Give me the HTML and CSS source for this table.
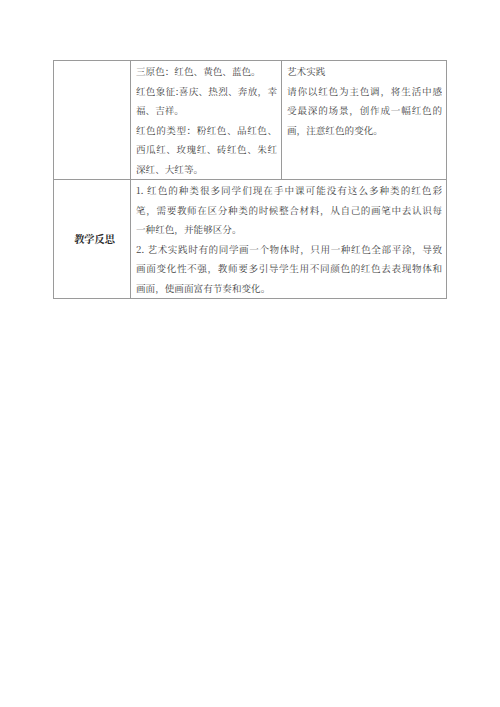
FILE: index.html
```html
<!DOCTYPE html>
<html lang="zh">
<head>
<meta charset="utf-8">
<link rel="stylesheet" href="styles.css">
</head>
<body>
<div class="page">
  <table class="plan">
    <colgroup>
      <col class="c1"><col class="c2"><col class="c3">
    </colgroup>
    <tr class="row">
      <td class="label"></td>
      <td class="cell">
        <span class="ln">三原色：红色、黄色、蓝色。</span>
        <span class="ln j">红色象征:喜庆、热烈、奔放，幸</span>
        <span class="ln">福、吉祥。</span>
        <span class="ln j">红色的类型：粉红色、品红色、</span>
        <span class="ln j">西瓜红、玫瑰红、砖红色、朱红</span>
        <span class="ln">深红、大红等。</span>
      </td>
      <td class="cell">
        <span class="ln">艺术实践</span>
        <span class="ln j">请你以红色为主色调，将生活中感</span>
        <span class="ln j">受最深的场景，创作成一幅红色的</span>
        <span class="ln">画，注意红色的变化。</span>
      </td>
    </tr>
    <tr class="row">
      <td class="label">教学反思</td>
      <td class="cell" colspan="2">
        <span class="ln j">1. 红色的种类很多同学们现在手中课可能没有这么多种类的红色彩</span>
        <span class="ln j">笔，需要教师在区分种类的时候整合材料，从自己的画笔中去认识每</span>
        <span class="ln">一种红色，并能够区分。</span>
        <span class="ln j">2. 艺术实践时有的同学画一个物体时，只用一种红色全部平涂，导致</span>
        <span class="ln j">画面变化性不强，教师要多引导学生用不同颜色的红色去表现物体和</span>
        <span class="ln">画面，使画面富有节奏和变化。</span>
      </td>
    </tr>
  </table>
</div>
</body>
</html>
```
FILE: styles.css
```css
html, body {
  margin: 0;
  padding: 0;
  background: #ffffff;
}
.page {
  width: 500px;
  height: 707px;
  padding: 60px 0 0 53px;
  box-sizing: border-box;
  font-family: "Noto Serif CJK SC", "Noto Sans CJK SC", "Noto Sans", serif;
  color: #444444;
}
.plan {
  border-collapse: collapse;
  table-layout: fixed;
  width: 393px;
}
.c1 { width: 77px; }
.c2 { width: 151px; }
.c3 { width: 165px; }
.row { height: 119px; }
.plan td {
  border: 1px solid #9a9a9a;
  padding: 1px 4px 0 5px;
  vertical-align: top;
  font-size: 9.6px;
  line-height: 19.5px;
}
.plan td.label {
  vertical-align: middle;
  text-align: center;
  font-weight: bold;
  font-size: 10.2px;
  color: #2a2a2a;
  padding: 0 0 0 5px;
}
.ln {
  display: block;
  height: 19.5px;
  overflow: hidden;
  white-space: nowrap;
  text-align: left;
}
.ln.j {
  white-space: normal;
  text-align: justify;
  text-align-last: justify;
}
```
